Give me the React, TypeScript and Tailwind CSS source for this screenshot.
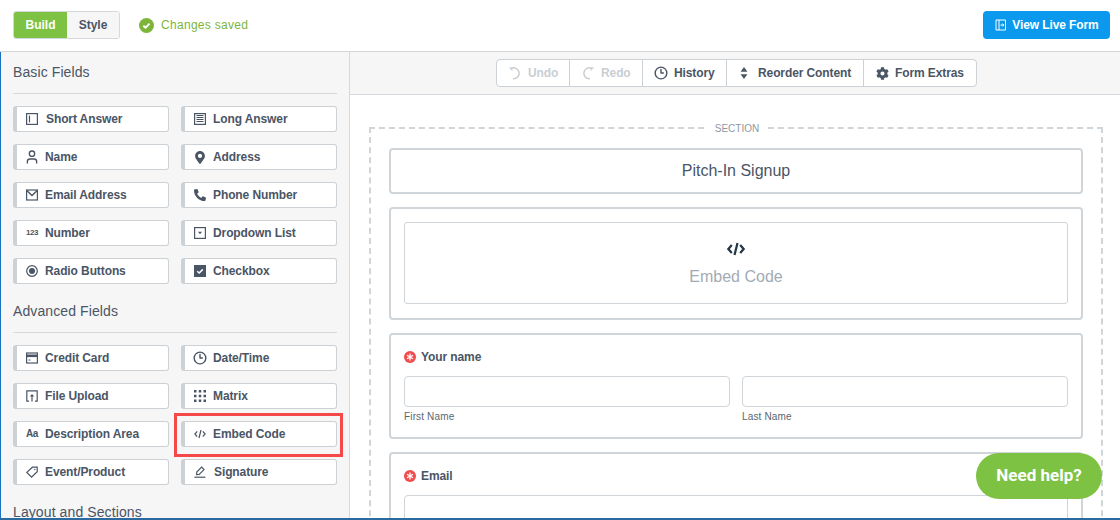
import type { ReactNode } from 'react';
import { Clock3, User } from 'lucide-react';
import { FaCog, FaMapMarkerAlt, FaPhoneAlt } from 'react-icons/fa';

const font = 'font-["Liberation_Sans",Arial,sans-serif]';

function IconBox({ children }: { children: ReactNode }) {
  return (
    <svg viewBox="0 0 12 12" className="size-3 text-[#4a5565]" fill="none" stroke="currentColor" strokeWidth="1.2">
      {children}
    </svg>
  );
}

const ShortIcon = () => (
  <IconBox>
    <rect x="0.6" y="0.6" width="10.8" height="10.8" />
    <path d="M3.5 2.6v6.8" />
  </IconBox>
);
const LongIcon = () => (
  <IconBox>
    <rect x="0.6" y="0.6" width="10.8" height="10.8" />
    <path d="M2.5 2.5h7M2.5 4.5h7M2.5 6.5h7M2.5 8.5h7" strokeWidth="1" />
  </IconBox>
);
const MailIcon = () => (
  <IconBox>
    <rect x="0.6" y="1" width="10.8" height="10" />
    <path d="M0.8 1.4 6 6.6l5.2-5.2" strokeWidth="1.4" />
  </IconBox>
);
const DropdownIcon = () => (
  <IconBox>
    <rect x="0.6" y="0.6" width="10.8" height="10.8" />
    <path d="M4 4.8h4L6 7.2z" fill="currentColor" stroke="none" />
  </IconBox>
);
const RadioIcon = () => (
  <IconBox>
    <circle cx="6" cy="6" r="5.3" />
    <circle cx="6" cy="6" r="3" fill="currentColor" stroke="none" />
  </IconBox>
);
const CheckIcon = () => (
  <svg viewBox="0 0 12 12" className="size-3">
    <rect width="12" height="12" fill="#4a5565" />
    <path d="M3.2 6.2 5.2 8l3.6-3.6" fill="none" stroke="#fff" strokeWidth="1.5" />
  </svg>
);
const CardIcon = () => (
  <IconBox>
    <rect x="0.6" y="1" width="10.8" height="10" />
    <path d="M1 3.8h10" strokeWidth="2.6" />
    <path d="M2.5 8h2" strokeWidth="1" />
  </IconBox>
);
const UploadIcon = () => (
  <IconBox>
    <path d="M3 11.2H.8V.8h10.4v10.4H9" />
    <path d="M6 11.5V5" />
    <path d="M3.8 6.6 6 4l2.2 2.6z" fill="currentColor" stroke="none" />
  </IconBox>
);
const MatrixIcon = () => (
  <svg viewBox="0 0 12 12" className="size-3" fill="#4a5565">
    {[0, 4.75, 9.5].flatMap((y) =>
      [0, 4.75, 9.5].map((x) => <rect key={`${x}-${y}`} x={x} y={y} width="2.5" height="2.5" />),
    )}
  </svg>
);
const TagIcon = () => (
  <IconBox>
    <path d="M.8 6.4 6.4 1.2h4.8v4.6l-5.6 5.4z" />
    <circle cx="8.8" cy="3.4" r="0.7" fill="currentColor" stroke="none" />
  </IconBox>
);
const SignIcon = () => (
  <IconBox>
    <path d="M2.6 8.6 2.8 6 7.6 1.2l2.4 2.4L5.2 8.4z" />
    <path d="M0.4 11.2h11" />
  </IconBox>
);
const CodeIcon = ({ className = 'w-3 h-3', width = 1.2 }: { className?: string; width?: number }) => (
  <svg viewBox="0 0 12 12" className={className} fill="none" stroke="currentColor" strokeWidth={width}>
    <path d="M3.2 3.4.9 6l2.3 2.6M8.8 3.4 11.1 6 8.8 8.6M7 2 5 10" />
  </svg>
);
const UndoIcon = () => (
  <svg viewBox="0 0 14 14" className="size-[14px]" fill="none" stroke="currentColor" strokeWidth="1.5">
    <path d="M3 2.6A5.4 5.4 0 1 1 5 12.6" />
    <path d="M.8 1.4h3.6v3.6z" fill="currentColor" stroke="none" />
  </svg>
);
const RedoIcon = () => (
  <svg viewBox="0 0 14 14" className="size-[14px]" fill="none" stroke="currentColor" strokeWidth="1.5">
    <path d="M11 2.6A5.4 5.4 0 1 0 9 12.6" />
    <path d="M13.2 1.4H9.6v3.6z" fill="currentColor" stroke="none" />
  </svg>
);

const small = 'size-3 text-[#4a5565]';

type Field = { label: string; icon: ReactNode; gap?: string };

const basicFields: Field[] = [
  { label: 'Short Answer', icon: <ShortIcon />, gap: 'gap-[8px]' },
  { label: 'Long Answer', icon: <LongIcon /> },
  { label: 'Name', icon: <User className="size-4 shrink-0 text-[#4a5565]" strokeWidth={2} /> },
  { label: 'Address', icon: <FaMapMarkerAlt className="size-[13px] text-[#4a5565]" /> },
  { label: 'Email Address', icon: <MailIcon /> },
  { label: 'Phone Number', icon: <FaPhoneAlt className={small} /> },
  { label: 'Number', icon: <span className="w-3 text-[8px] leading-none tracking-[-0.5px] text-[#4a5565]">123</span> },
  { label: 'Dropdown List', icon: <DropdownIcon /> },
  { label: 'Radio Buttons', icon: <RadioIcon /> },
  { label: 'Checkbox', icon: <CheckIcon /> },
];

const advancedFields: Field[] = [
  { label: 'Credit Card', icon: <CardIcon /> },
  { label: 'Date/Time', icon: <Clock3 className="size-[14px] shrink-0 text-[#4a5565]" strokeWidth={2.4} /> },
  { label: 'File Upload', icon: <UploadIcon /> },
  { label: 'Matrix', icon: <MatrixIcon /> },
  { label: 'Description Area', icon: <span className="w-3 text-[10px] leading-none font-bold tracking-[-0.5px] text-[#4a5565]">Aa</span> },
  { label: 'Embed Code', icon: <CodeIcon className={small} /> },
  { label: 'Event/Product', icon: <TagIcon /> },
  { label: 'Signature', icon: <SignIcon />, gap: 'gap-[8px]' },
];

function FieldButton({ field }: { field: Field }) {
  return (
    <div
      className={`relative flex h-[26px] items-center rounded-[3px] border border-l-[4px] border-[#ccd1d6] bg-white pl-[9px] text-[12px] font-bold tracking-[-0.1px] text-[#4a5565] ${field.gap ?? 'gap-[7px]'}`}
    >
      <span className="flex w-3 shrink-0 items-center justify-center">{field.icon}</span>
      {field.label}
      {field.label === 'Embed Code' && (
        <span className="absolute top-[-9px] right-[-7px] bottom-[-11px] left-[-11px] border-[3px] border-[#f54848]" />
      )}
    </div>
  );
}

function FieldGroup({ title, fields }: { title: string; fields: Field[] }) {
  return (
    <section>
      <h2 className="border-b border-[#d5d8dc] pb-[13px] text-[14px] leading-[16px] tracking-[0.1px] text-[#4a5565]">{title}</h2>
      <div className="mt-[12px] grid grid-cols-2 gap-x-[12px] gap-y-[12px]">
        {fields.map((f) => (
          <FieldButton key={f.label} field={f} />
        ))}
      </div>
    </section>
  );
}

function ToolButton({ icon, label, className, disabled }: { icon: ReactNode; label: string; className: string; disabled?: boolean }) {
  return (
    <div className={`flex items-center gap-[6px] text-[12px] font-bold tracking-[-0.1px] ${className} ${disabled ? 'text-[#c9ced3]' : 'text-[#4a5565]'}`}>
      {icon}
      {label}
    </div>
  );
}

function RequiredLabel({ label }: { label: string }) {
  return (
    <div className="flex items-center gap-[5px] text-[12px] leading-[14px] font-bold tracking-[-0.1px] text-[#4a5565]">
      <svg viewBox="0 0 12 12" className="size-3">
        <circle cx="6" cy="6" r="6" fill="#f24b4b" />
        <path d="M6 2.6v6.8M3 4.3l6 3.4M9 4.3 3 7.7" stroke="#fff" strokeWidth="1.3" />
      </svg>
      {label}
    </div>
  );
}

function NameField({ label }: { label: string }) {
  return (
    <div className="flex-1">
      <div className="h-[31px] rounded-[4px] border border-[#d0d5d9]" />
      <p className="mt-[4px] text-[10px] leading-[12px] tracking-[0.15px] text-[#5c6670]">{label}</p>
    </div>
  );
}

export default function App() {
  return (
    <div className={`${font} relative h-[520px] w-[1120px] overflow-hidden border-b-2 border-[#2a6a9e] bg-white`}>
      <header className="flex h-[52px] items-center justify-between border-b border-[#d5d8dc] pr-[10px] pb-[1px] pl-[13px]">
        <div className="flex items-center">
          <div className="flex h-[28px] overflow-hidden rounded-[3px] border border-[#d5d8dc] text-[12px] font-bold">
            <span className="flex w-[53px] items-center justify-center bg-[#7dc242] text-white">Build</span>
            <span className="flex w-[52px] items-center justify-center bg-[#f6f6f6] text-[#4a5565]">Style</span>
          </div>
          <svg viewBox="0 0 16 16" className="ml-[19px] size-[15px]">
            <circle cx="8" cy="8" r="8" fill="#7db53a" />
            <path d="M4.6 8.2 7 10.4l4.2-4.4" fill="none" stroke="#fff" strokeWidth="2" />
          </svg>
          <span className="ml-[7px] text-[12px] tracking-[0.3px] text-[#7db53a]">Changes saved</span>
        </div>
        <div className="flex h-[28px] w-[127px] items-center justify-center gap-[5px] rounded-[4px] bg-[#0a99ec] pl-[1px] text-[12px] font-bold tracking-[-0.1px] text-white">
          <svg viewBox="0 0 12 12" className="size-3" fill="none" stroke="#fff" strokeWidth="1">
            <path d="M1 1h9.5v10H1zM4 1v10M5.5 6h3M7.5 4.6 8.8 6 7.5 7.4" />
          </svg>
          View Live Form
        </div>
      </header>

      <div className="flex h-[466px]">
        <aside className="h-full w-[350px] shrink-0 overflow-hidden border-r border-l-[1px] border-r-[#d5d8dc] border-l-[#1a73c0] bg-[#f6f6f6] pt-[12px] pr-[12px] pl-[12px]">
          <div className="flex flex-col gap-[19px]">
            <FieldGroup title="Basic Fields" fields={basicFields} />
            <FieldGroup title="Advanced Fields" fields={advancedFields} />
            <h2 className="text-[14px] leading-[16px] tracking-[0.1px] text-[#4a5565]">Layout and Sections</h2>
          </div>
        </aside>

        <main className="flex min-w-0 flex-1 flex-col">
          <div className="flex h-[43px] shrink-0 items-center justify-center border-b border-[#d5d8dc] bg-[#f6f6f6] pl-[3px]">
            <div className="flex h-[28px] rounded-[4px] border border-[#ccd1d6] bg-white">
              <ToolButton disabled label="Undo" icon={<UndoIcon />} className="w-[73px] border-r border-[#ccd1d6] pl-[11px]" />
              <ToolButton disabled label="Redo" icon={<RedoIcon />} className="w-[73px] border-r border-[#ccd1d6] pl-[11px]" />
              <ToolButton label="History" icon={<Clock3 className="size-[14px]" strokeWidth={2.4} />} className="w-[84px] border-r border-[#ccd1d6] pl-[11px]" />
              <ToolButton
                label="Reorder Content"
                icon={
                  <svg viewBox="0 0 10 14" className="mr-[3px] h-3 w-[10px]" fill="currentColor">
                    <path d="M5 0l4 5.5H1zM5 14 1 8.5h8z" />
                  </svg>
                }
                className="w-[137px] border-r border-[#ccd1d6] pl-[12px]"
              />
              <ToolButton label="Form Extras" icon={<FaCog className="size-[13px]" />} className="w-[112px] pl-[12px]" />
            </div>
          </div>

          <div className="relative flex-1 overflow-hidden pt-[32px] pr-[17px] pl-[19px]">
            <div className="relative h-[480px] border-2 border-b-0 border-dashed border-[#d0d5d9] px-[18px] pt-[19px]">
              <span className="absolute top-[-6px] left-1/2 ml-[1px] -translate-x-1/2 bg-white px-[7px] text-[10px] leading-[12px] text-[#8f989f]">
                SECTION
              </span>
              <div className="flex flex-col gap-[13px]">
                <div className="flex h-[46px] items-center justify-center rounded-[4px] border-2 border-[#d0d5d9] text-[16px] text-[#4a5565]">
                  Pitch-In Signup
                </div>
                <div className="rounded-[4px] border-2 border-[#d0d5d9] px-[13px] pt-[13px] pb-[14px]">
                  <div className="flex h-[82px] flex-col items-center justify-center gap-[9px] rounded-[3px] border border-[#d0d5d9] pt-[1px]">
                    <CodeIcon className="h-[18px] w-[24px] text-[#243746]" width={1.5} />
                    <span className="text-[16px] leading-[20px] text-[#a2abb3]">Embed Code</span>
                  </div>
                </div>
                <div className="h-[106px] rounded-[4px] border-2 border-[#d0d5d9] px-[13px] pt-[15px]">
                  <RequiredLabel label="Your name" />
                  <div className="mt-[12px] flex gap-[12px]">
                    <NameField label="First Name" />
                    <NameField label="Last Name" />
                  </div>
                </div>
                <div className="h-[106px] rounded-[4px] border-2 border-[#d0d5d9] px-[13px] pt-[15px]">
                  <RequiredLabel label="Email" />
                  <div className="mt-[12px] h-[31px] rounded-[4px] border border-[#d0d5d9]" />
                </div>
              </div>
            </div>
          </div>
        </main>
      </div>

      <div className="absolute top-[453px] left-[976px] flex h-[46px] w-[126px] items-center justify-center rounded-full bg-[#7dc242] font-['Roboto',sans-serif] text-[17px] font-bold text-white">
        Need help?
      </div>
    </div>
  );
}
